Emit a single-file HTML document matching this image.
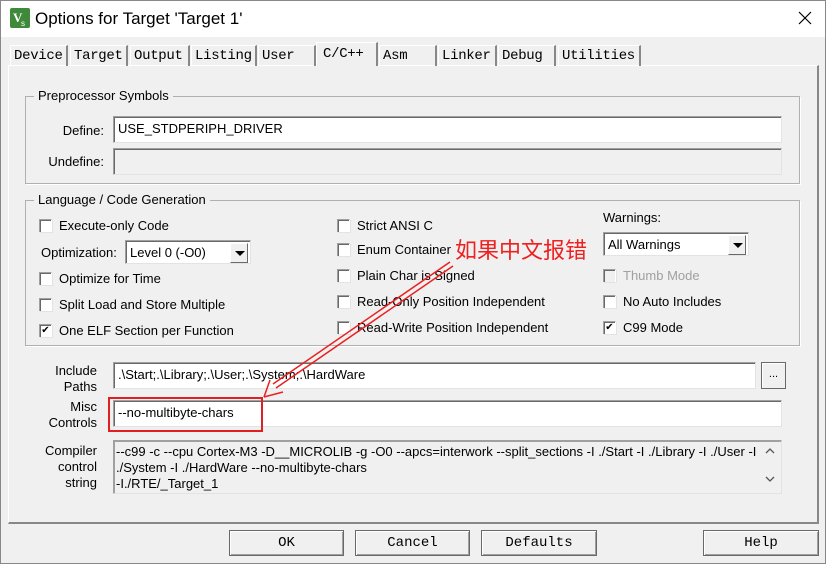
<!DOCTYPE html>
<html><head><meta charset="utf-8"><style>
*{box-sizing:border-box;margin:0;padding:0}
body{width:826px;height:564px;background:#f0f0f0;position:relative;overflow:hidden;font-family:"Liberation Sans","Noto Sans CJK SC",sans-serif;font-size:13px;color:#000}
.a{position:absolute}
.win{left:0;top:0;width:826px;height:564px;border:1px solid #888}
.title{left:1px;top:1px;width:824px;height:36px;background:#fff}
.tab{position:absolute;top:45px;height:21px;font-family:"Liberation Mono","DejaVu Sans Mono",monospace;font-size:14px;line-height:21px;padding-left:3px;border-left:1px solid #fff;border-right:2px solid #888;border-top:1px solid #fff;letter-spacing:-0.3px;white-space:nowrap}
.panel{left:8px;top:65px;width:811px;height:459px;border-top:1px solid #fff;border-left:1px solid #fff;border-right:2px solid #888;border-bottom:2px solid #888}
.grp{position:absolute;border:1px solid #b0b0b0;box-shadow:1px 1px 0 #fff}
.grp span{position:absolute;top:-9px;left:8px;background:#f0f0f0;padding:0 4px;font-size:13px}
.inp{position:absolute;background:#fff;border-top:1px solid #a0a0a0;border-left:1px solid #a0a0a0;border-right:1px solid #e3e3e3;border-bottom:1px solid #e3e3e3;box-shadow:inset 1px 1px 0 #696969;padding:4px 0 0 4px;font-size:13px}
.cb{position:absolute;width:13px;height:13px;background:#fff;border-top:1px solid #a0a0a0;border-left:1px solid #a0a0a0;border-right:1px solid #fff;box-shadow:inset 1px 1px 0 #696969,1px 1px 0 #e3e3e3;font-size:10px;line-height:11px;text-align:center}
.lb{position:absolute;font-size:13px;white-space:nowrap}
.btn{position:absolute;top:530px;height:26px;border:1px solid #696969;box-shadow:inset 1px 1px 0 #fff,inset -1px -1px 0 #a0a0a0;font-family:"Liberation Mono","DejaVu Sans Mono",monospace;font-size:14px;text-align:center;line-height:24px}
.r{text-align:right}
.dd{position:absolute;width:18px;height:20px;top:2px;right:2px;background:#f0f0f0;border:1px solid #fff;border-right-color:#696969;border-bottom-color:#696969}
.dd:after{content:"";position:absolute;left:4px;top:7px;border-left:5px solid transparent;border-right:5px solid transparent;border-top:5px solid #000}
</style></head><body>
<div class="a win"></div>
<div class="a title"></div>
<svg class="a" style="left:10px;top:8px" width="20" height="20"><rect width="20" height="20" rx="2" fill="#3f8a3a"/><text x="3" y="14" font-size="13" font-weight="bold" fill="#fff" font-family="Liberation Serif">V</text><text x="11" y="18" font-size="8" fill="#fff" font-family="Liberation Sans">s</text></svg>
<div class="lb" style="left:35px;top:9px;font-size:17px">Options for Target 'Target 1'</div>
<svg class="a" style="left:798px;top:11px" width="14" height="14"><path d="M1 1L13 13M13 1L1 13" stroke="#000" stroke-width="1.2"/></svg>

<div class="a panel"></div>
<div class="tab" style="left:10px;width:58px">Device</div>
<div class="tab" style="left:70px;width:58px">Target</div>
<div class="tab" style="left:130px;width:60px">Output</div>
<div class="tab" style="left:191px;width:66px">Listing</div>
<div class="tab" style="left:258px;width:58px">User</div>
<div class="tab" style="left:316px;top:42px;height:24px;width:62px;background:#f0f0f0;padding-left:6px;line-height:22px;z-index:2">C/C++</div>
<div class="tab" style="left:379px;width:58px">Asm</div>
<div class="tab" style="left:438px;width:59px">Linker</div>
<div class="tab" style="left:498px;width:58px">Debug</div>
<div class="tab" style="left:558px;width:83px">Utilities</div>

<div class="grp" style="left:25px;top:96px;width:775px;height:88px"><span>Preprocessor Symbols</span></div>
<div class="lb r" style="left:40px;top:123px;width:64px">Define:</div>
<div class="inp" style="left:113px;top:116px;width:669px;height:27px">USE_STDPERIPH_DRIVER</div>
<div class="lb r" style="left:40px;top:154px;width:64px">Undefine:</div>
<div class="inp" style="left:113px;top:148px;width:669px;height:27px;background:#f0f0f0"></div>

<div class="grp" style="left:25px;top:200px;width:775px;height:146px"><span>Language / Code Generation</span></div>
<div class="cb" style="left:39px;top:219px"></div><div class="lb" style="left:59px;top:218px">Execute-only Code</div>
<div class="lb" style="left:41px;top:245px">Optimization:</div>
<div class="inp" style="left:125px;top:240px;width:126px;height:24px;padding-top:4px">Level 0 (-O0)<div class="dd"></div></div>
<div class="cb" style="left:39px;top:272px"></div><div class="lb" style="left:59px;top:271px">Optimize for Time</div>
<div class="cb" style="left:39px;top:298px"></div><div class="lb" style="left:59px;top:297px">Split Load and Store Multiple</div>
<div class="cb" style="left:39px;top:324px">✔</div><div class="lb" style="left:59px;top:323px">One ELF Section per Function</div>

<div class="cb" style="left:337px;top:219px"></div><div class="lb" style="left:357px;top:218px">Strict ANSI C</div>
<div class="cb" style="left:337px;top:243px"></div><div class="lb" style="left:357px;top:242px">Enum Container always int</div>
<div class="cb" style="left:337px;top:269px"></div><div class="lb" style="left:357px;top:268px">Plain Char is Signed</div>
<div class="cb" style="left:337px;top:295px"></div><div class="lb" style="left:357px;top:294px">Read-Only Position Independent</div>
<div class="cb" style="left:337px;top:321px"></div><div class="lb" style="left:357px;top:320px">Read-Write Position Independent</div>

<div class="lb" style="left:603px;top:210px">Warnings:</div>
<div class="inp" style="left:603px;top:232px;width:146px;height:24px;padding-top:4px">All Warnings<div class="dd"></div></div>
<div class="cb" style="left:603px;top:269px;background:#f0f0f0"></div><div class="lb" style="left:623px;top:268px;color:#a0a0a0">Thumb Mode</div>
<div class="cb" style="left:603px;top:295px"></div><div class="lb" style="left:623px;top:294px">No Auto Includes</div>
<div class="cb" style="left:603px;top:321px">✔</div><div class="lb" style="left:623px;top:320px">C99 Mode</div>

<div class="lb" style="left:455px;top:235px;font-size:22px;color:#ee2020;font-family:'Noto Sans CJK SC',sans-serif;background:#f0f0f0;line-height:28px">如果中文报错</div>

<div class="lb r" style="left:30px;top:363px;width:67px;line-height:16px">Include<br>Paths</div>
<div class="inp" style="left:113px;top:362px;width:643px;height:27px">.\Start;.\Library;.\User;.\System;.\HardWare</div>
<div class="a" style="left:761px;top:362px;width:25px;height:27px;border:1px solid #696969;box-shadow:inset 1px 1px 0 #fff;text-align:center;font-size:11px;line-height:22px">...</div>
<div class="lb r" style="left:30px;top:399px;width:67px;line-height:16px">Misc<br>Controls</div>
<div class="inp" style="left:113px;top:400px;width:669px;height:27px">--no-multibyte-chars</div>
<div class="a" style="left:108px;top:397px;width:155px;height:35px;border:2px solid #e02020"></div>
<div class="lb r" style="left:30px;top:443px;width:67px;line-height:16px">Compiler<br>control<br>string</div>
<div class="inp" style="left:113px;top:440px;width:669px;height:54px;background:#f0f0f0;padding:3px 24px 0 2px;line-height:16px;font-size:13px;box-shadow:inset 1px 1px 0 #a0a0a0;white-space:nowrap">--c99 -c --cpu Cortex-M3 -D__MICROLIB -g -O0 --apcs=interwork --split_sections -I ./Start -I ./Library -I ./User -I<br>./System -I ./HardWare --no-multibyte-chars<br>-I./RTE/_Target_1</div>
<svg class="a" style="left:764px;top:446px" width="12" height="40"><path d="M2 7L6 3L10 7M2 31L6 35L10 31" stroke="#555" stroke-width="1.3" fill="none"/></svg>

<svg class="a" style="left:0;top:0" width="826" height="564"><g stroke="#e82020" stroke-width="1.5" fill="none"><path d="M453 266 L276 388"/><path d="M450 262 L273 384"/><path d="M264 397 L270 380 M264 397 L283 392"/></g></svg>

<div class="btn" style="left:229px;width:115px">OK</div>
<div class="btn" style="left:355px;width:115px">Cancel</div>
<div class="btn" style="left:481px;width:116px">Defaults</div>
<div class="btn" style="left:703px;width:116px">Help</div>
</body></html>
